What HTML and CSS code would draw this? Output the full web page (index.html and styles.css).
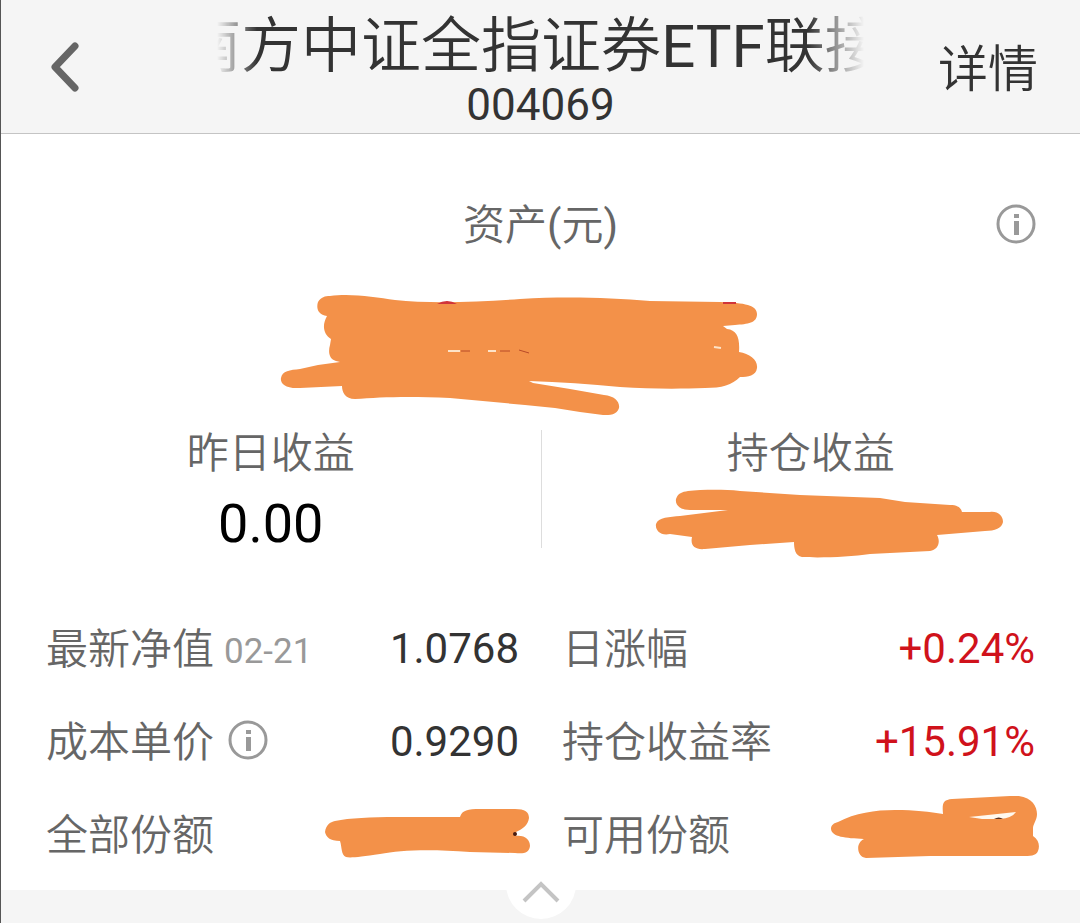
FILE: index.html
```html
<!DOCTYPE html>
<html lang="zh-CN">
<head>
    <meta charset="UTF-8">
    <meta name="viewport" content="width=device-width, initial-scale=1.0">
    <title>南方中证全指证券ETF联接</title>
    <link rel="stylesheet" href="styles.css">
</head>
<body>
    <header class="header">
        <button class="back" aria-label="返回">
            <svg width="32" height="56" viewBox="0 0 32 56" fill="none" stroke="#666" stroke-width="7" stroke-linecap="round" stroke-linejoin="round"><path d="M28 7 8 28l20 21"/></svg>
        </button>
        <div class="title">
            <h1>南方中证全指证券<span class="latin">ETF</span>联接</h1>
            <p>004069</p>
        </div>
        <a class="detail" href="#">详情</a>
    </header>

    <main>
        <section class="asset">
            <h2>资产<span class="latin">(</span>元<span class="latin">)</span></h2>
            <button class="info" aria-label="资产说明">
                <svg width="40" height="40" viewBox="0 0 40 40"><circle cx="20" cy="20" r="18" fill="none" stroke="#999" stroke-width="3"/><path d="M18 10h5v4h-5zM18 17h5v14h-5z" fill="#999"/></svg>
            </button>
        </section>
        <svg class="asset-mask" width="478" height="122" viewBox="280 294 478 122">
            <path class="ink" d="M330 296C350 293 375 297 395 300C430 304 480 302 520 299C570 296 610 298 650 301L720 302C745 303 757 305 757 314C757 323 748 324 735 325L723 326L727 329C737 330 740 338 739 352C750 354 758 360 757 368C756 376 748 377 740 377C732 385 722 388 705 388C680 389 650 389 620 387C590 384 560 382 529 381L533 383L570 389L604 395C615 396 620 402 619 408C617 415 610 415 603 415L580 412L555 408L525 405L450 398C410 396 380 397 355 399C345 399 342 392 342 386L300 388C285 389 280 383 281 378C282 371 290 370 300 369L318 365L340 362L336 361C329 359 328 352 330 345L331 339C323 334 322 325 327 316C318 315 316 308 318 302C321 297 325 296 330 296Z"/>
            <path d="M437 304q10-6 20 0zM723 302h13v2h-13z" fill="#d0353a"/>
            <path d="M448 351h12M488 351h8M714 347l7 1" stroke="#fde3c8" stroke-width="2"/>
            <path d="M461 351h9M500 351h10M519 350l10 3" stroke="#b84a28" stroke-width="1"/>
        </svg>

        <section class="profit">
            <div class="profit-item">
                <h3>昨日收益</h3>
                <p>0.00</p>
            </div>
            <div class="profit-item">
                <h3>持仓收益</h3>
                <svg class="profit-mask" width="348" height="70" viewBox="655 489 348 70">
                    <path class="ink" d="M688 491C700 490 720 489 740 491L800 495L880 498L905 502L950 505C958 505 961 508 962 512L990 512C998 511 1003 516 1003 522C1002 528 995 531 985 531L937 535C941 542 938 550 930 551L870 554C850 557 820 558 802 557C795 556 794 548 794 542L750 545L705 549C695 550 690 546 692 537L670 534C660 536 655 530 656 524C658 517 670 517 680 516L728 510L690 510C680 510 675 505 676 499C678 493 682 492 688 491Z"/>
                </svg>
            </div>
        </section>

        <dl class="stats">
            <div class="stat">
                <dt>最新净值 <small>02-21</small></dt>
                <dd>1.0768</dd>
            </div>
            <div class="stat">
                <dt>日涨幅</dt>
                <dd class="up">+0.24%</dd>
            </div>
            <div class="stat">
                <dt>成本单价
                    <button class="info" aria-label="成本单价说明">
                        <svg width="40" height="40" viewBox="0 0 40 40"><circle cx="20" cy="20" r="18" fill="none" stroke="#999" stroke-width="3"/><path d="M18 10h5v4h-5zM18 17h5v14h-5z" fill="#999"/></svg>
                    </button>
                </dt>
                <dd>0.9290</dd>
            </div>
            <div class="stat">
                <dt>持仓收益率</dt>
                <dd class="up">+15.91%</dd>
            </div>
            <div class="stat">
                <dt>全部份额</dt>
                <dd class="masked">
                    <svg width="206" height="78" viewBox="325 796 206 78">
                        <path class="ink" d="M335 821C350 818 370 817 397 817L460 817C462 810 468 809 480 809L515 809C525 809 529 812 529 818C528 825 523 829 516 832L516 836C525 835 530 840 530 846C529 853 524 854 515 853L470 852C430 849 400 850 380 854C360 857 350 858 346 857C341 855 342 847 340 841C330 841 326 837 325 832C326 825 330 822 335 821Z"/>
                        <circle cx="515" cy="834" r="2" fill="#4a1c10"/>
                    </svg>
                </dd>
            </div>
            <div class="stat">
                <dt>可用份额</dt>
                <dd class="masked">
                    <svg width="216" height="78" viewBox="831 796 216 78">
                        <path class="ink" d="M838 822C855 813 875 810 895 810C915 810 930 812 943 814C942 803 943 800 952 799L1010 796C1030 794 1037 805 1037 814C1037 820 1033 824 1033 828L1033 836C1039 840 1040 846 1038 851C1036 856 1030 856 1022 856L930 856L866 858C857 857 855 843 864 839C845 838 832 837 831 829C831 825 834 823 838 822Z"/>
                        <path d="M969 817L1016 812Q1012 818 1000 819L982 819Z" fill="#fff8ee"/>
                        <path d="M994 819q5-3 9 0z" fill="#5a3020"/>
                    </svg>
                </dd>
            </div>
        </dl>
    </main>

    <footer class="footer">
        <button class="collapse" aria-label="收起">
            <svg width="38" height="24" viewBox="0 0 38 24" fill="none" stroke="#c4c4c4" stroke-width="4"><path d="M2 21 19 4l17 17"/></svg>
        </button>
    </footer>
</body>
</html>
```
FILE: styles.css
```css
* {
    box-sizing: border-box;
    margin: 0;
    padding: 0;
}
body {
    font-family: Roboto, "Noto Sans CJK SC", sans-serif;
    font-size: 42px;
    line-height: 60px;
    color: #666;
    background-color: #f5f5f5;
    border-left: 1px solid #555;
    min-height: 100vh;
}
h1, h2, h3 {
    font-weight: 400;
}
button {
    background: none;
    border: none;
    cursor: pointer;
}
svg {
    display: block;
}
.ink {
    fill: #f39149;
}
.latin {
    font-weight: 400;
}
.header {
    display: grid;
    grid-template-columns: 1fr 65% 1fr;
    align-items: center;
    height: 134px;
    padding: 4px 42px 0;
    border-bottom: 1px solid #c4c4c4;
    color: #333;
}
.header .title {
    min-width: 0;
    text-align: center;
}
.title h1 {
    height: 72px;
    font-size: 60px;
    font-weight: 350;
    line-height: 72px;
    text-align: left;
    text-indent: -36px;
    white-space: nowrap;
    overflow: hidden;
    -webkit-mask-image: linear-gradient(to right, transparent, #000 40px, #000 calc(100% - 56px), transparent);
    mask-image: linear-gradient(to right, transparent, #000 40px, #000 calc(100% - 56px), transparent);
}
.title p {
    font-size: 44px;
    line-height: 44px;
}
.back {
    justify-self: start;
    padding: 0 0 4px 4px;
}
.detail {
    justify-self: end;
    padding-top: 2px;
    font-size: 50px;
    font-weight: 350;
    color: inherit;
    text-decoration: none;
}
main {
    background-color: #fff;
    padding-bottom: 9px;
}
.asset {
    display: grid;
    grid-template-columns: 1fr auto 1fr;
    align-items: center;
    padding: 60px 44px 0;
}
.asset h2 {
    grid-column: 2;
    padding-top: 2px;
    font-size: 42px;
    font-weight: 350;
}
.asset .info {
    justify-self: end;
    padding-bottom: 3px;
}
.asset-mask {
    margin: 38px auto 0;
    position: relative;
    right: 22px;
}
.profit {
    display: grid;
    grid-template-columns: 1fr 1fr;
    margin-top: 14px;
    text-align: center;
}
.profit-item {
    height: 118px;
}
.profit-item + .profit-item {
    border-left: 1px solid #ddd;
}
.profit h3 {
    padding-top: 2px;
    font-size: 42px;
    font-weight: 350;
    line-height: 44px;
}
.profit p {
    margin-top: 18px;
    font-size: 54px;
    color: #000;
}
.profit-mask {
    margin: 13px auto 0;
    position: relative;
    left: 18px;
}
.stats {
    display: grid;
    grid-template-columns: 1fr 1fr;
    column-gap: 43px;
    padding: 54px 45px 0;
}
.stat {
    display: flex;
    align-items: center;
    justify-content: space-between;
    height: 93px;
}
.stat dt {
    display: flex;
    align-items: center;
    padding-top: 2px;
    font-weight: 350;
    white-space: nowrap;
}
.stat small {
    margin-left: 10px;
    padding-top: 4px;
    font-size: 35px;
    font-weight: 400;
    color: #999;
}
.stat .info {
    margin-left: 14px;
    padding-bottom: 6px;
}
.stat dd {
    color: #333;
}
.stat .up {
    color: #d0121b;
}
.stat .masked {
    position: relative;
    z-index: 1;
    margin-right: -12px;
}
.footer {
    display: flex;
    justify-content: center;
    height: 33px;
}
.collapse {
    display: flex;
    justify-content: center;
    align-items: flex-start;
    width: 70px;
    height: 39px;
    margin-top: -10px;
    border-radius: 0 0 35px 35px;
    background-color: #fff;
}
```
